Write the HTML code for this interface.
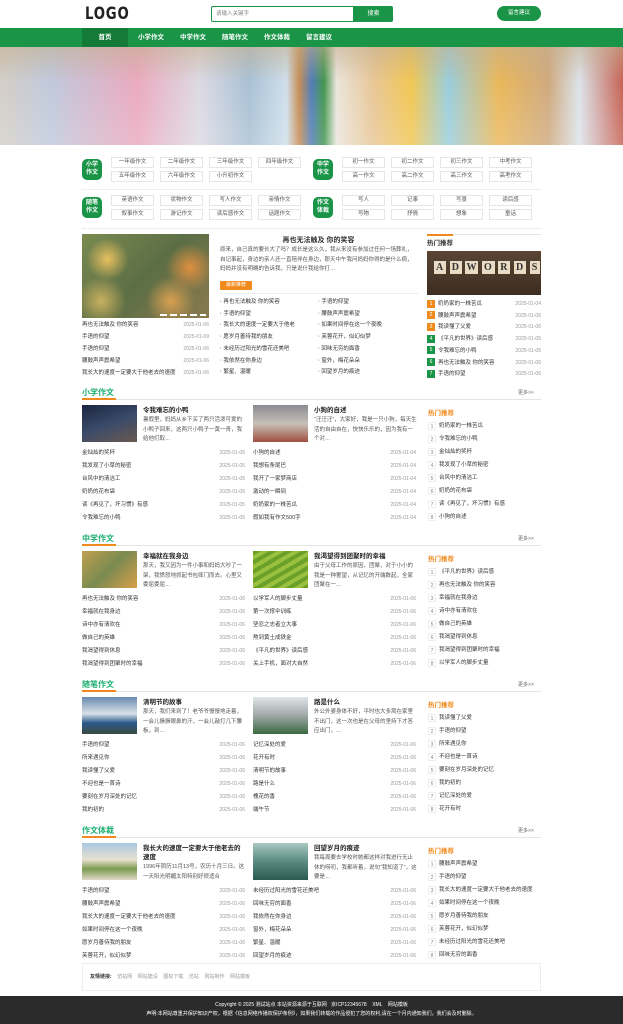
<!DOCTYPE html>
<html><head><meta charset="utf-8"><style>
*{margin:0;padding:0;box-sizing:border-box}
body{width:623px;height:1024px;overflow:hidden;position:relative;background:#fff;font-family:"Liberation Sans","Noto Sans CJK SC",sans-serif;font-size:6px;color:#333}
.a{position:absolute;white-space:nowrap}
.g{background:#1a9447}
.btn{position:absolute;width:43px;height:11px;border:1px solid #e6e6e6;font-size:5.5px;color:#555;text-align:center;line-height:9px}
.badge{position:absolute;width:20px;height:21px;border-radius:5px;background:#1a9447;color:#fff;font-size:6px;font-weight:bold;text-align:center;line-height:8px;padding-top:2px}
.row{position:absolute;height:11px;font-size:5.5px;line-height:11px;color:#333}
.row span{position:absolute;right:0;color:#999;font-size:5px}
.hot{position:absolute;font-size:5.5px;line-height:9px}
.hot i{display:inline-block;width:8px;height:8px;font-style:normal;color:#fff;text-align:center;line-height:8px;font-size:5px;margin-right:3px;vertical-align:top}
.n i{background:#fff;color:#888;border:1px solid #eee}
.sh{position:absolute;font-size:8px;font-weight:bold;color:#1aae6f}
</style></head><body>
<!-- header -->
<div class="a" style="left:85px;top:4px;font-size:17px;font-weight:900;letter-spacing:1px;color:#222;font-family:'DejaVu Sans',sans-serif;transform:scaleX(0.78);transform-origin:left top">LOGO</div>
<div class="a" style="left:211px;top:6px;width:143px;height:16px;border:1px solid #1a9447;border-radius:2px 0 0 2px;font-size:5.5px;color:#888;line-height:14px;padding-left:4px">请输入关键字</div>
<div class="a g" style="left:354px;top:6px;width:39px;height:16px;color:#fff;font-size:6px;text-align:center;line-height:16px;border-radius:0 2px 2px 0">搜索</div>
<div class="a g" style="left:497px;top:6px;width:44px;height:15px;color:#fff;font-size:5.5px;text-align:center;line-height:15px;border-radius:8px">留言建议</div>
<div class="a g" style="left:0;top:28px;width:623px;height:19px"></div>
<div class="a" style="left:82px;top:28px;width:46px;height:19px;background:#137a38"></div>
<div class="a" style="left:82px;top:28px;height:19px;line-height:19px;color:#fff;font-size:6.5px;font-weight:bold">
<span style="display:inline-block;width:46px;text-align:center">首页</span><span style="display:inline-block;width:38px;text-align:center;margin-left:4px">小学作文</span><span style="display:inline-block;width:38px;text-align:center;margin-left:4px">中学作文</span><span style="display:inline-block;width:38px;text-align:center;margin-left:4px">随笔作文</span><span style="display:inline-block;width:38px;text-align:center;margin-left:4px">作文体裁</span><span style="display:inline-block;width:38px;text-align:center;margin-left:4px">留言建议</span></div>
<!-- banner -->
<div class="a" style="left:0;top:47px;width:623px;height:98px;background:linear-gradient(90deg,#cfc9c0 0%,#b9c3d8 8%,#e8a0b8 22%,#d9d6e0 32%,#9fbad0 40%,#c9dbe8 46%,#c08040 48%,#3d6fb0 50%,#2d8a3a 52%,#e8e2d8 54%,#e5c08a 60%,#f0c040 66%,#8ec8d8 72%,#e8b048 80%,#caa070 88%,#d8e0e8 93%,#c05040 100%)"></div>
<div class="a" style="left:0;top:47px;width:623px;height:98px;background:linear-gradient(180deg,rgba(200,180,150,.6) 0%,rgba(255,255,255,.1) 35%,rgba(255,255,255,.25) 100%)"></div>
<!-- categories -->
<div class="badge" style="left:82px;top:159px">小学<br>作文</div>
<div class="btn" style="left:111px;top:157px">一年级作文</div><div class="btn" style="left:160px;top:157px">二年级作文</div><div class="btn" style="left:209px;top:157px">三年级作文</div><div class="btn" style="left:258px;top:157px">四年级作文</div>
<div class="btn" style="left:111px;top:171px">五年级作文</div><div class="btn" style="left:160px;top:171px">六年级作文</div><div class="btn" style="left:209px;top:171px">小升初作文</div>
<div class="badge" style="left:313px;top:159px">中学<br>作文</div>
<div class="btn" style="left:342px;top:157px">初一作文</div><div class="btn" style="left:391px;top:157px">初二作文</div><div class="btn" style="left:440px;top:157px">初三作文</div><div class="btn" style="left:489px;top:157px">中考作文</div>
<div class="btn" style="left:342px;top:171px">高一作文</div><div class="btn" style="left:391px;top:171px">高二作文</div><div class="btn" style="left:440px;top:171px">高三作文</div><div class="btn" style="left:489px;top:171px">高考作文</div>
<div class="a" style="left:82px;top:189px;width:459px;border-top:1px dotted #ddd"></div>
<div class="badge" style="left:82px;top:197px">随笔<br>作文</div>
<div class="btn" style="left:111px;top:195px">英语作文</div><div class="btn" style="left:160px;top:195px">状物作文</div><div class="btn" style="left:209px;top:195px">写人作文</div><div class="btn" style="left:258px;top:195px">亲情作文</div>
<div class="btn" style="left:111px;top:209px">叙事作文</div><div class="btn" style="left:160px;top:209px">游记作文</div><div class="btn" style="left:209px;top:209px">读后感作文</div><div class="btn" style="left:258px;top:209px">话题作文</div>
<div class="badge" style="left:313px;top:197px">作文<br>体裁</div>
<div class="btn" style="left:342px;top:195px">写人</div><div class="btn" style="left:391px;top:195px">记事</div><div class="btn" style="left:440px;top:195px">写景</div><div class="btn" style="left:489px;top:195px">读后感</div>
<div class="btn" style="left:342px;top:209px">写物</div><div class="btn" style="left:391px;top:209px">抒情</div><div class="btn" style="left:440px;top:209px">想象</div><div class="btn" style="left:489px;top:209px">童话</div>
<div class="a" style="left:82px;top:228px;width:459px;border-top:1px dotted #ddd"></div>
<!-- main -->
<div class="a" style="left:82px;top:234px;width:127px;height:84px;background:radial-gradient(circle at 20% 30%,#e8c060 0,transparent 18%),radial-gradient(circle at 85% 40%,#e09040 0,transparent 20%),radial-gradient(circle at 70% 80%,#d8a050 0,transparent 22%),radial-gradient(circle at 15% 80%,#c8b060 0,transparent 20%),linear-gradient(135deg,#7a8a50,#5c6e45 50%,#8a7a50)"></div>
<div class="a" style="left:160px;top:314px;width:46px;height:2px;background:repeating-linear-gradient(90deg,#fff 0 7px,transparent 7px 10px)"></div>
<div class="row" style="left:82px;top:320px;width:127px">再也无法触及 你的笑容<span>2025-01-06</span></div>
<div class="row" style="left:82px;top:332px;width:127px">手语的仰望<span>2025-01-09</span></div>
<div class="row" style="left:82px;top:344px;width:127px">手语的仰望<span>2025-01-06</span></div>
<div class="row" style="left:82px;top:356px;width:127px">腰鼓声声震希望<span>2025-01-06</span></div>
<div class="row" style="left:82px;top:368px;width:127px">我长大的速度一定要大于他老去的速度<span>2025-01-06</span></div>
<div class="a" style="left:220px;top:235px;width:197px;text-align:center;font-size:7px;font-weight:bold">再也无法触及 你的笑容</div>
<div class="a" style="left:220px;top:246px;width:197px;white-space:normal;font-size:5.5px;line-height:9.5px;color:#555;height:29px;overflow:hidden">原来，自己真的要长大了吗？成长是这么久，我从来没有参加过任何一场葬礼，自记事起，身边的亲人还一直陪伴在身边，那天中午我问妈妈你得的是什么病，妈妈并没有明确的告诉我，只是说什我给你打…</div>
<div class="a" style="left:220px;top:281px;width:32px;height:9px;background:#f08a1c;color:#fff;font-size:5px;text-align:center;line-height:9px;border-radius:1px">最新推荐</div>
<div class="a" style="left:220px;top:293px;width:197px;border-top:1px dotted #ddd"></div>
<div class="a" style="left:220px;top:297px;line-height:11.7px;font-size:5.5px;white-space:pre"><b style="color:#1a9447">· </b>再也无法触及 你的笑容
<b style="color:#1a9447">· </b>手语的仰望
<b style="color:#1a9447">· </b>我长大的速度一定要大于他老
<b style="color:#1a9447">· </b>愿岁月善待我的朋友
<b style="color:#1a9447">· </b>未经历过阳光的雪花还美吧
<b style="color:#1a9447">· </b>我依然在你身边
<b style="color:#1a9447">· </b>繁星、温暖</div>
<div class="a" style="left:318px;top:297px;line-height:11.7px;font-size:5.5px;white-space:pre"><b style="color:#1a9447">· </b>手语的仰望
<b style="color:#1a9447">· </b>腰鼓声声震希望
<b style="color:#1a9447">· </b>如果时间停在这一个夜晚
<b style="color:#1a9447">· </b>芙蓉花开，似幻似梦
<b style="color:#1a9447">· </b>回味无穷的面香
<b style="color:#1a9447">· </b>窗外，梅花朵朵
<b style="color:#1a9447">· </b>回望岁月的痕迹</div>
<div class="a" style="left:427px;top:234px;width:114px;height:1px;background:#e5e5e5"></div>
<div class="a" style="left:427px;top:234px;width:26px;height:1.5px;background:#f08a1c"></div>
<div class="a" style="left:427px;top:237px;font-size:6.5px;font-weight:bold">热门推荐</div>
<div class="a" style="left:427px;top:251px;width:114px;height:44px;background:linear-gradient(180deg,#5a4535,#3d2e22);"></div>
<div class="a" style="left:434px;top:262px;font-size:10px;font-weight:bold;color:#333;letter-spacing:1px;font-family:'Liberation Serif',serif"><span style="background:#e8dcc4;padding:1px 2px">A</span> <span style="background:#e8dcc4;padding:1px 2px">D</span> <span style="background:#e8dcc4;padding:1px 1px">W</span> <span style="background:#e8dcc4;padding:1px 2px">O</span> <span style="background:#e8dcc4;padding:1px 2px">R</span> <span style="background:#e8dcc4;padding:1px 2px">D</span> <span style="background:#e8dcc4;padding:1px 2px">S</span></div>
<div class="hot" style="left:427px;top:299px;width:114px;line-height:11.7px">
<div style="position:relative"><i style="background:#f08a1c;vertical-align:middle">1</i>奶奶家的一株苦瓜<span style="position:absolute;right:0;color:#999;font-size:5px">2025-01-04</span></div>
<div style="position:relative"><i style="background:#f08a1c;vertical-align:middle">2</i>腰鼓声声震希望<span style="position:absolute;right:0;color:#999;font-size:5px">2025-01-06</span></div>
<div style="position:relative"><i style="background:#f08a1c;vertical-align:middle">3</i>我读懂了父爱<span style="position:absolute;right:0;color:#999;font-size:5px">2025-01-06</span></div>
<div style="position:relative"><i style="background:#1a9447;vertical-align:middle">4</i>《平凡的世界》读后感<span style="position:absolute;right:0;color:#999;font-size:5px">2025-01-05</span></div>
<div style="position:relative"><i style="background:#1a9447;vertical-align:middle">5</i>令我难忘的小鸭<span style="position:absolute;right:0;color:#999;font-size:5px">2025-01-05</span></div>
<div style="position:relative"><i style="background:#1a9447;vertical-align:middle">6</i>再也无法触及 你的笑容<span style="position:absolute;right:0;color:#999;font-size:5px">2025-01-06</span></div>
<div style="position:relative"><i style="background:#1a9447;vertical-align:middle">7</i>手语的仰望<span style="position:absolute;right:0;color:#999;font-size:5px">2025-01-06</span></div>
</div>

<!-- SECTIONS -->
<div id="secs"></div>
<div class="a" style="left:82px;top:963px;width:459px;height:28px;border:1px solid #eee;font-size:5px;line-height:26px;padding-left:7px;color:#999"><b style="color:#333">友情链接:</b>&nbsp;&nbsp;&nbsp;&nbsp;仿站网&nbsp;&nbsp;&nbsp;&nbsp;网站建设&nbsp;&nbsp;&nbsp;&nbsp;图标下载&nbsp;&nbsp;&nbsp;&nbsp;仿站&nbsp;&nbsp;&nbsp;&nbsp;网站制作&nbsp;&nbsp;&nbsp;&nbsp;网站模板</div>
<div class="a" style="left:0;top:996px;width:623px;height:28px;background:#2b2b2b;color:#fff;font-size:5px;text-align:center;line-height:9px;padding-top:5px;white-space:normal">Copyright © 2025 测试站点 本站资源来源于互联网 &nbsp;&nbsp;京ICP12345678 &nbsp;&nbsp; XML &nbsp;&nbsp; 网站模板<br>声明:本网站尊重并保护知识产权，根据《信息网络传播权保护条例》，如果我们转载的作品侵犯了您的权利,请在一个月内通知我们，我们会及时删除。</div>

<script>
var S=[
{t:387,h:"小学作文",c1:["令我难忘的小鸭","暑假里，妈妈从乡下买了两只活泼可爱的小鸭子回来，这两只小鸭子一黄一青，我给他们取…","linear-gradient(160deg,#1a2540,#3a4a6a 50%,#6a5a50)"],c2:["小狗的自述","“汪汪汪”，大家好，我是一只小狗，每天生活的自由自在，快快乐乐的，因为我有一个对…","linear-gradient(180deg,#8a8a90,#c8c0b8 50%,#a05040)"],
l1:["金灿灿的奖杯","我发现了小草的秘密","台风中的清洁工","奶奶的花布袋","读《再见了，坏习惯》有感","令我难忘的小鸭"],d1:"2025-01-05",
l2:["小狗的自述","我想有条尾巴","我开了一家梦商店","激动的一瞬间","奶奶家的一株苦瓜","假如我有作文500字"],d2:"2025-01-04",
hot:["奶奶家的一株苦瓜","令我难忘的小鸭","金灿灿的奖杯","我发现了小草的秘密","台风中的清洁工","奶奶的花布袋","读《再见了，坏习惯》有感","小狗的自述"]},
{t:533,h:"中学作文",c1:["幸福就在我身边","那天，我又因为一件小事和妈妈大吵了一架，我愤怒地抓起书包摔门而去。心里又委屈委屈…","linear-gradient(135deg,#c0a050,#7a8a50 50%,#d8a048)"],c2:["我渴望得到团聚时的幸福","由于父母工作的原因，团聚，对于小小的我是一种奢望，从记忆的开端数起，全家团聚在一…","repeating-linear-gradient(150deg,#6aa028 0 4px,#9ac040 4px 8px)"],
l1:["再也无法触及 你的笑容","幸福就在我身边","诗中亦有清欢在","做自己的英雄","我渴望得到休息","我渴望得到团聚时的幸福"],d1:"2025-01-06",
l2:["以学军人的脚步丈量","第一次撑伞训练","坚忍之志者立大事","熬到黄土成铁金","《平凡的世界》读后感","关上手机，面对大自然"],d2:"2025-01-06",
hot:["《平凡的世界》读后感","再也无法触及 你的笑容","幸福就在我身边","诗中亦有清欢在","做自己的英雄","我渴望得到休息","我渴望得到团聚时的幸福","以学军人的脚步丈量"]},
{t:679,h:"随笔作文",c1:["清明节的故事","那天，我们来到了！老爷爷慢慢地走着，一会儿撅撅眼鼻的汗，一会儿敲打几下腰板，到…","linear-gradient(180deg,#6a8ab0,#d8e0e8 45%,#2a5a8a 70%,#3a4a40)"],c2:["路是什么","外公外婆身体不好，平时也大多窝在家里不出门，这一次也是在父母的坚持下才答应出门，…","linear-gradient(180deg,#e0e4e8,#a0a8a8 50%,#3a6a40)"],
l1:["手语的仰望","所来遇见你","我读懂了父爱","不迎也是一首诗","要刻在岁月深处的记忆","我的初的"],d1:"2025-01-06",
l2:["记忆深处的爱","花开有时","清明节的故事","路是什么","槐花的香","端午节"],d2:"2025-01-06",
hot:["我读懂了父爱","手语的仰望","所来遇见你","不迎也是一首诗","要刻在岁月深处的记忆","我的初的","记忆深处的爱","花开有时"]},
{t:825,h:"作文体裁",c1:["我长大的速度一定要大于他老去的速度","1996年阴历11月13号，农历十月三日。这一天阳光明媚太阳特别好很适合","linear-gradient(180deg,#a8c8e0,#e8e0d0 45%,#7a9a50 70%,#e0d8c8)"],c2:["回望岁月的痕迹","我每周要去学校时她都这样对我进行无止休的唠叨，我都听着，说句“我知道了”，这要是…","linear-gradient(180deg,#a8c8c0,#5a8a80 50%,#2a5a50)"],
l1:["手语的仰望","腰鼓声声震希望","我长大的速度一定要大于他老去的速度","如果时间停在这一个夜晚","愿岁月善待我的朋友","芙蓉花开，似幻似梦"],d1:"2025-01-06",
l2:["未经历过阳光的雪花还美吧","回味无穷的面香","我依然在你身边","窗外，梅花朵朵","繁星、温暖","回望岁月的痕迹"],d2:"2025-01-06",
hot:["腰鼓声声震希望","手语的仰望","我长大的速度一定要大于他老去的速度","如果时间停在这一个夜晚","愿岁月善待我的朋友","芙蓉花开，似幻似梦","未经历过阳光的雪花还美吧","回味无穷的面香"]}];
var h="";
S.forEach(function(s){var t=s.t;
h+='<div class="sh" style="left:82px;top:'+t+'px">'+s.h+'</div>';
h+='<div class="a" style="left:82px;top:'+(t+12)+'px;width:459px;height:1px;background:#e5e5e5"></div>';
h+='<div class="a" style="left:82px;top:'+(t+11)+'px;width:34px;height:2px;background:#f08a1c"></div>';
h+='<div class="a" style="left:518px;top:'+(t+2)+'px;font-size:5px;color:#666">更多>></div>';
[[s.c1,82,143],[s.c2,253,314]].forEach(function(c){
var long=c[0][0].length>12;
h+='<div class="a" style="left:'+c[1]+'px;top:'+(t+18)+'px;width:55px;height:37px;background:'+c[0][2]+'"></div>';
h+='<div class="a" style="left:'+c[2]+'px;top:'+(t+19)+'px;width:103px;white-space:normal;font-size:6.5px;line-height:9px;font-weight:bold;color:#222">'+c[0][0]+'</div>';
h+='<div class="a" style="left:'+c[2]+'px;top:'+(t+(long?38:29))+'px;width:103px;white-space:normal;font-size:5.5px;line-height:9.5px;color:#555;height:'+(long?19:29)+'px;overflow:hidden">'+c[0][1]+'</div>';});
s.l1.forEach(function(x,i){h+='<div class="row" style="left:82px;top:'+(t+61+i*13)+'px;width:163px">'+x+'<span>'+s.d1+'</span></div>';});
s.l2.forEach(function(x,i){h+='<div class="row" style="left:253px;top:'+(t+61+i*13)+'px;width:163px">'+x+'<span>'+s.d2+'</span></div>';});
h+='<div class="a" style="left:428px;top:'+(t+20)+'px;font-size:6.5px;font-weight:bold;color:#f08a1c">热门推荐</div>';
s.hot.forEach(function(x,i){h+='<div class="hot n" style="left:428px;top:'+(t+35+i*13)+'px"><i>'+(i+1)+'</i>'+x+'</div>';});
});
document.getElementById("secs").outerHTML=h;
</script>
</body></html>
